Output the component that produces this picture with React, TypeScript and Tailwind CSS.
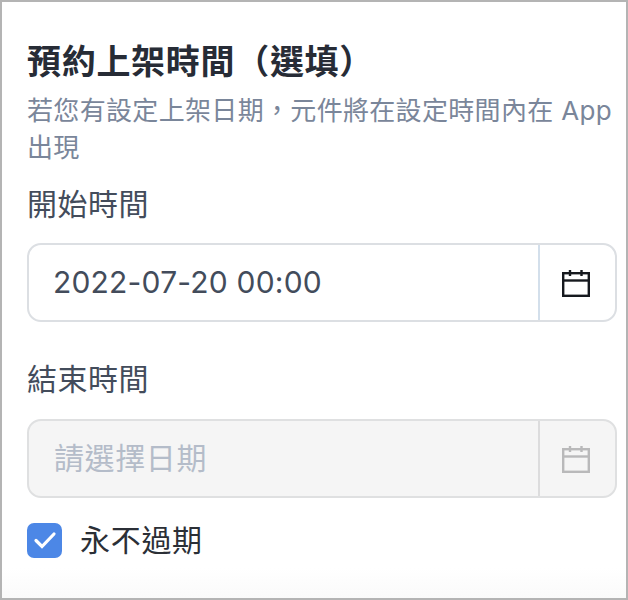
const fontStack = "font-['Inter','Noto_Sans_CJK_TC',sans-serif]";

function CalendarIcon({ className }: { className: string }) {
  return (
    <svg width="28" height="28" viewBox="0 0 28 28" fill="none" stroke="currentColor" strokeWidth="2.4" className={className}>
      <rect x="1.2" y="4.2" width="25.6" height="22.6" />
      <path d="M1 11.5h26" />
      <path d="M8 1v6M19.5 1v6" />
    </svg>
  );
}

interface DateFieldProps {
  value: string;
  disabled?: boolean;
}

function DateField({ value, disabled }: DateFieldProps) {
  return (
    <div
      className={`flex h-[79px] rounded-[14px] border-2 ${
        disabled ? "border-[#dfe0e1] bg-[#f5f5f5]" : "border-[#dcdfe3] bg-white"
      }`}
    >
      <div
        className={`flex flex-1 items-center text-[30px] ${
          disabled ? "pl-[25px] tracking-[0.6px] text-[#b4bcc9]" : "pl-[24px] tracking-[0.2px] text-[#434c5b]"
        }`}
      >
        {value}
      </div>
      <div
        className={`flex w-[77px] items-center justify-center border-l-2 pr-[4px] ${
          disabled ? "border-[#dcdcdd]" : "border-[#d3dfeb]"
        }`}
      >
        <CalendarIcon className={disabled ? "text-[#b9b9ba]" : "text-[#16191e]"} />
      </div>
    </div>
  );
}

export default function App() {
  return (
    <div className={`h-[600px] w-[628px] overflow-hidden bg-[#b4b4b4] p-[2px] ${fontStack}`}>
      <div className="h-full bg-gradient-to-b from-white from-[95%] to-[#fafafa] pl-[25px] pr-[9px] pt-[38px]">
        <h1 className="text-[34px] leading-[44px] font-bold tracking-[0.7px] text-[#272c36]">預約上架時間（選填）</h1>
        <p className="mt-[8px] text-[26px] leading-[37px] tracking-[0.33px] text-[#7a869a]">
          若您有設定上架日期，元件將在設定時間內在 App 出現
        </p>
        <div className="mt-[18px] text-[30px] leading-[40px] tracking-[0.5px] text-[#434c5b]">開始時間</div>
        <div className="mt-[19px]">
          <DateField value="2022-07-20 00:00" />
        </div>
        <div className="mt-[37px] text-[30px] leading-[40px] tracking-[0.5px] text-[#434c5b]">結束時間</div>
        <div className="mt-[20px]">
          <DateField value="請選擇日期" disabled />
        </div>
        <div className="mt-[22px] flex items-center gap-[18px]">
          <span className="flex h-[35px] w-[35px] items-center justify-center rounded-[7px] bg-[#4c87e6]">
            <svg width="26" height="26" viewBox="0 0 26 26" fill="none" stroke="white" strokeWidth="3.2" strokeLinecap="round">
              <path d="M4 13.5l6 6 12-12.5" />
            </svg>
          </span>
          <span className="text-[30px] leading-[40px] tracking-[0.7px] text-[#2b2f36]">永不過期</span>
        </div>
      </div>
    </div>
  );
}
